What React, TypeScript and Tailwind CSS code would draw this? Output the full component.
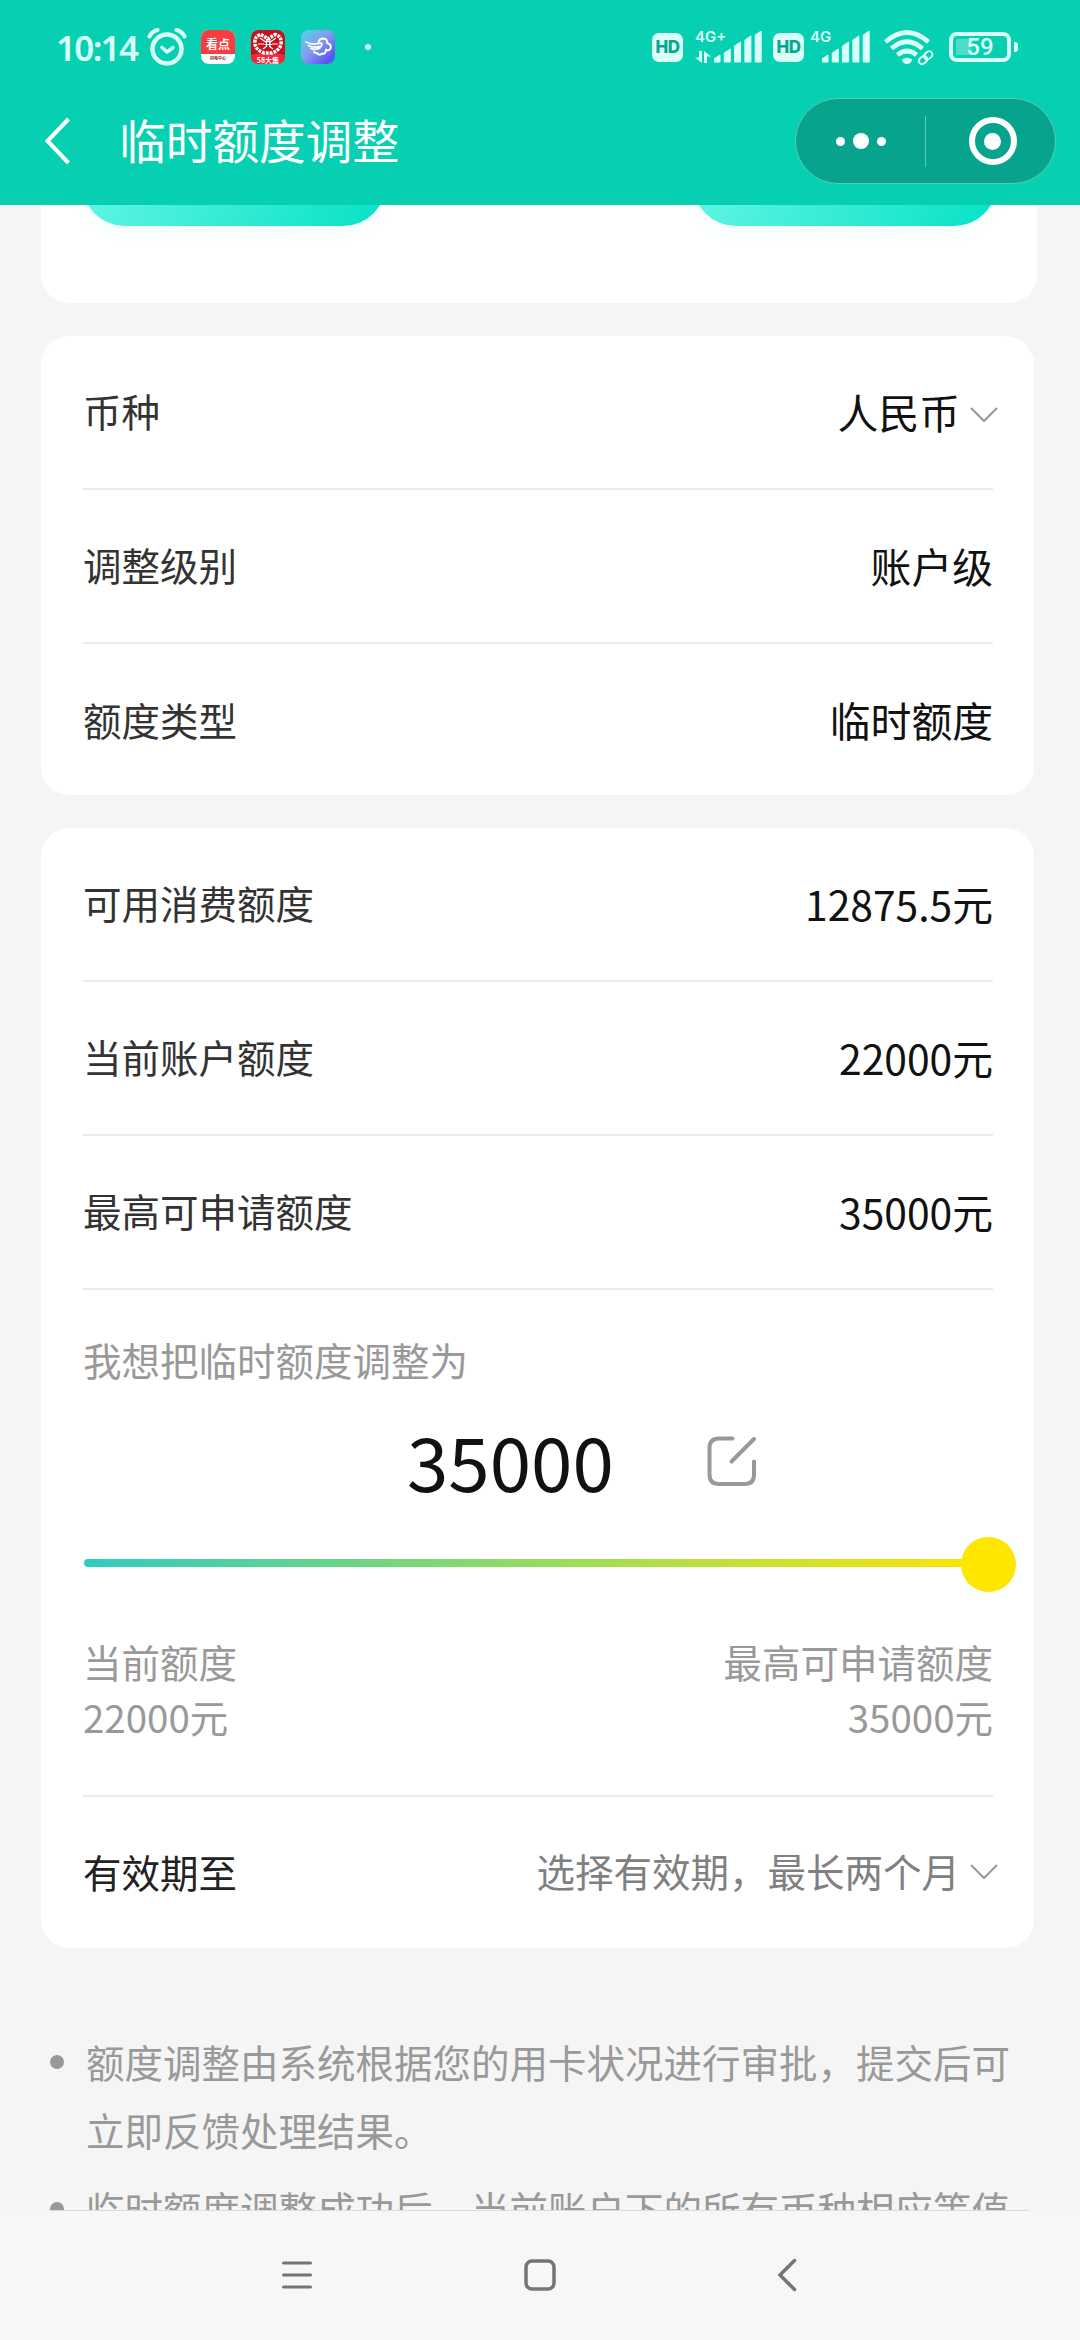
import type { ReactNode } from 'react'
import clsx from 'clsx'

type RowProps = {
  label: string
  children: ReactNode
  last?: boolean
  labelClassName?: string
}

const bars = [7, 13, 20, 26, 31]

const notes = [
  '额度调整由系统根据您的用卡状况进行审批，提交后可立即反馈处理结果。',
  '临时额度调整成功后，当前账户下的所有币种相应等值',
]

function Signal({ className }: { className?: string }) {
  return (
    <svg className={className} width="48" height="32" fill="currentColor">
      {bars.map((h, i) => (
        <path key={h} d={`M${i * 10.3} 31v-${h - 4}l6 -4v${h}z`} stroke="currentColor" strokeWidth="1" strokeLinejoin="round" />
      ))}
    </svg>
  )
}

function HdBadge() {
  return (
    <span className="flex h-[29px] w-[31px] items-center justify-center rounded-[7px] bg-[#d8fff8] font-['Inter'] text-[17px] font-extrabold leading-none tracking-[-0.5px] text-[#07a78f]">
      HD
    </span>
  )
}

function AlarmIcon() {
  return (
    <svg width="40" height="38" viewBox="0 0 40 38" fill="none" stroke="currentColor" strokeLinecap="round" strokeLinejoin="round">
      <circle cx="20" cy="21" r="14.5" strokeWidth="4.5" />
      <path d="M15 19.5l5 4.5 6-4.5" strokeWidth="3.5" />
      <path d="M2.5 8.5C4 5 7 2.8 10.5 2M29.5 2C33 2.8 36 5 37.5 8.5" strokeWidth="4" />
    </svg>
  )
}

function StatusBar() {
  return (
    <div className="flex h-[95px] items-start pl-[56px] pt-[28px] text-[#d8fff8]">
      <span className="mt-[2px] w-[91px] font-['Noto_Sans'] text-[35px] font-semibold leading-[36px] tracking-[-1.7px]">
        10:14
      </span>
      <AlarmIcon />
      <div className="ml-[14px] mt-[2px] flex gap-4">
        <span className="flex size-[34px] flex-col overflow-hidden rounded-[8px] bg-white">
          <span className="flex h-6 items-center justify-center bg-[#f93c3f] pt-1 font-['Noto_Sans_CJK_SC'] text-[12px] font-bold leading-none text-white">
            看点
          </span>
          <span className="text-center font-['Noto_Sans_CJK_SC'] text-[4px] font-bold leading-[9px] text-[#8a2020]">
            闪电中心
          </span>
        </span>
        <svg width="34" height="34" viewBox="0 0 34 34">
          <rect width="34" height="34" rx="8" fill="#c9101c" />
          <path d="M0 25Q17 20 34 25V26Q34 34 26 34H8Q0 34 0 26z" fill="#ee2a3e" />
          <path d="M10 4.5L17 9L24 4.5Q31 6 30 14Q29 20 21 23H13Q5 20 4 14Q3 6 10 4.500z" fill="none" stroke="#fff" strokeWidth="3.500" strokeDasharray="2.800 1" />
          <path d="M9 8L16 13M25 8L18 13M7 14H13M27 14H21M12 19L16 16M22 19L18 16M15.500 9V17M19 9V17M13.500 11.500H21M13.500 14.500H21" stroke="#fff" strokeWidth="1.200" />
          <text x="17" y="32.500" textAnchor="middle" fontSize="7" fontWeight="700" fill="#fff" fontFamily="Noto Sans CJK SC">58大集</text>
        </svg>
        <svg width="34" height="34" viewBox="0 0 34 34">
          <defs>
            <linearGradient id="cloud" x1="0" y1="0.3" x2="0.7" y2="1">
              <stop offset="0" stopColor="#5fc4ee" />
              <stop offset="0.45" stopColor="#869bee" />
              <stop offset="1" stopColor="#5b55f4" />
            </linearGradient>
          </defs>
          <rect width="34" height="34" rx="8" fill="url(#cloud)" />
          <g fill="none" stroke="#fff" strokeLinecap="round" strokeLinejoin="round">
            <path d="M17.500 12Q18.500 8.500 22 8.500Q27 9 26 13Q31 14.500 29.500 18.500Q27.500 21.500 25 19.500Q25 24.500 21 23.500Q18.500 26 16 23Q13.500 23.500 13 21.500" strokeWidth="2" />
            <path d="M5 12Q11 15.500 20 13Q22 14 20 16Q13 18.500 7.500 15.500M10 18.500Q15 20.500 19.500 17.500" strokeWidth="1.700" />
          </g>
        </svg>
      </div>
      <span className="ml-[30px] mt-4 size-[6px] rounded-full bg-current" />
      <div className="ml-auto mr-[62px] mt-[3px] flex">
        <div className="mt-[2px]">
          <HdBadge />
        </div>
        <div className="relative ml-3 h-8 w-[68px] font-['Inter'] text-[15px] font-semibold leading-none">
          <span className="absolute -top-[2px] left-0">4G+</span>
          <svg className="absolute left-0 top-[20px]" width="16" height="12" fill="currentColor">
            <path d="M4 0h3v12L0 6.500h4zM9 12V0l7 5.500h-4V12z" />
          </svg>
          <Signal className="absolute left-[19px] top-0" />
        </div>
        <div className="ml-[10px] mt-[2px]">
          <HdBadge />
        </div>
        <div className="relative ml-[6px] h-8 w-[61px] font-['Inter'] text-[15px] font-semibold leading-none">
          <span className="absolute -top-[2px] left-0">4G</span>
          <Signal className="absolute left-3 top-0" />
        </div>
        <svg className="ml-[13px] -mt-px" width="50" height="36" viewBox="0 0 50 36" fill="none" stroke="currentColor">
          <path d="M1.500 12Q23-7 44.500 12M7.500 18.500Q23 5 38.500 18.500M13.500 25Q23 17 32.500 25" strokeWidth="4.600" />
          <path d="M18 29.500Q23 26 28 29.500Q27 34 23 34Q19 34 18 29.500z" fill="currentColor" stroke="none" />
          <g strokeWidth="2" transform="rotate(-42 41.500 27.500)">
            <rect x="33.500" y="24.500" width="9" height="6.500" rx="3.200" />
            <rect x="40.500" y="24.500" width="9" height="6.500" rx="3.200" />
          </g>
        </svg>
        <div className="ml-[15px] flex h-[31px] items-center gap-[3px]">
          <span className="flex h-[30px] w-[62px] items-center justify-center rounded-[8px] border-4 border-current bg-[linear-gradient(90deg,#4fdcc6_30%,transparent_40%)] bg-clip-content p-[3px] font-['Roboto'] text-[24px] font-medium leading-none">
            59
          </span>
          <span className="h-[10px] w-1 rounded-r-[3px] bg-current" />
        </div>
      </div>
    </div>
  )
}

function Header() {
  return (
    <header className="relative z-10 h-[205px] shrink-0 bg-[#07d0b2]">
      <StatusBar />
      <div className="flex h-[92px] items-center pl-[44px] pr-[24px]">
        <svg width="28" height="48" fill="none" stroke="#fff" strokeWidth="4">
          <path d="M24.500 2L3.500 24L24.500 46" />
        </svg>
        <h1 className="ml-[47px] pb-[4px] text-[46.700px] leading-none text-white">临时额度调整</h1>
        <div className="ml-auto flex h-[86px] w-[261px] items-center rounded-full border border-[#52cdb9] bg-[#07a38c]">
          <div className="flex w-[129px] items-center justify-center gap-2">
            <span className="size-[9px] rounded-full bg-white" />
            <span className="size-4 rounded-full bg-white" />
            <span className="size-[9px] rounded-full bg-white" />
          </div>
          <div className="h-[51px] w-px bg-[#52cdb9]" />
          <div className="flex w-[129px] items-center justify-center pl-[4px]">
            <span className="flex size-12 items-center justify-center rounded-full border-[6px] border-white">
              <span className="size-[17px] rounded-full bg-white" />
            </span>
          </div>
        </div>
      </div>
    </header>
  )
}

function Row({ label, children, last, labelClassName }: RowProps) {
  return (
    <div className={clsx('flex items-center justify-between', last ? 'h-[151px]' : 'h-[154px] border-b-2 border-[#ebebeb] pb-[2px]')}>
      <span className={clsx('text-[38.500px]', labelClassName ?? 'text-[#333]')}>{label}</span>
      <span className="flex items-center pt-[1px] text-[40.800px] text-[#111]">{children}</span>
    </div>
  )
}

function Chevron({ className }: { className?: string }) {
  return (
    <svg className={clsx('-mr-[5px] ml-[10px]', className)} width="28" height="16" fill="none" stroke="#999" strokeWidth="2">
      <path d="M1 1L14 14L27 1" />
    </svg>
  )
}

function LimitSlider() {
  return (
    <div className="relative mt-[43px] h-[55px]">
      <div className="absolute left-px top-[22px] h-2 w-[909px] rounded-full bg-[linear-gradient(90deg,#2fcbc0,#95dc5e_50%,#ffe600)]" />
      <div className="absolute -right-[23px] top-0 size-[55px] rounded-full bg-[#ffe600]" />
    </div>
  )
}

function PillButton() {
  return <div className="h-[86px] w-[304px] rounded-full bg-[linear-gradient(115deg,#68f6e6,#06e2c6)] shadow-[0_6px_16px_rgba(90,250,230,0.08)]" />
}

export default function App() {
  return (
    <div className="flex h-[2340px] w-[1080px] flex-col overflow-hidden bg-[#f5f5f5] font-['Noto_Sans_CJK_SC',sans-serif]">
      <Header />
      <main className="h-[2005px] shrink-0 overflow-hidden pl-[41px]">
        <section className="-mt-[65px] flex h-[163px] w-[996px] justify-between rounded-[28px] bg-white pl-[41px] pr-[40px]">
          <PillButton />
          <PillButton />
        </section>

        <section className="mt-[33px] w-[993px] rounded-[28px] bg-white pl-[42px] pr-[41px]">
          <Row label="币种">
            人民币
            <Chevron className="mt-[6px]" />
          </Row>
          <Row label="调整级别">账户级</Row>
          <Row label="额度类型" last>
            临时额度
          </Row>
        </section>

        <section className="mt-[33px] w-[993px] rounded-[28px] bg-white pl-[42px] pr-[41px]">
          <Row label="可用消费额度">12875.5元</Row>
          <Row label="当前账户额度">22000元</Row>
          <Row label="最高可申请额度">35000元</Row>
          <div className="h-[507px] border-b-2 border-[#ebebeb] pt-[42px] text-[38.500px] text-[#999]">
            <p className="leading-[55px]">我想把临时额度调整为</p>
            <div className="mt-[42px] flex h-[65px]">
              <div className="ml-[324px] w-[210px] text-[74.500px] leading-[62px] text-[#111]">35000</div>
              <svg className="ml-[90px] mt-[7px]" width="50" height="51" fill="none" stroke="#999" strokeWidth="4" strokeLinecap="round">
                <path d="M25.500 2.500H12Q2.500 2.500 2.500 12V38.500Q2.500 48 12 48H37.500Q47 48 47 38.500V25.500M24.500 25.500L47 3" />
              </svg>
            </div>
            <LimitSlider />
            <div className="mt-[42px] flex justify-between leading-[55px]">
              <p>
                当前额度
                <br />
                22000元
              </p>
              <p className="text-right">
                最高可申请额度
                <br />
                35000元
              </p>
            </div>
          </div>
          <Row label="有效期至" labelClassName="pb-[2px] text-[#222]" last>
            <span className="pb-[4px] text-[38.500px] text-[#808080]">选择有效期，最长两个月</span>
            <Chevron className="-mt-[2px]" />
          </Row>
        </section>

        <ul className="mt-[80px] space-y-3 text-[38.500px] leading-[67.500px] text-[#999]">
          {notes.map((note) => (
            <li key={note} className="flex pl-[9px]">
              <span className="mr-[22px] mt-[27px] size-[14px] shrink-0 rounded-full bg-[#999]" />
              <p className="w-[930px]">{note}</p>
            </li>
          ))}
        </ul>
      </main>

      <nav className="flex flex-1 flex-col bg-[#f7f7f7] text-[#757575]">
        <div className="ml-[49px] h-px w-[980px] bg-[#dcdcdc]" />
        <div className="flex h-[128px] items-center pl-[282px]">
          <svg width="30" height="30" stroke="currentColor" strokeWidth="3" strokeLinecap="round">
            <path d="M1.500 3H28.500M1.500 15H28.500M1.500 27H28.500" />
          </svg>
          <svg className="ml-[212px]" width="32" height="32" fill="none" stroke="currentColor" strokeWidth="3.500">
            <rect x="2" y="2" width="28" height="28" rx="6" />
          </svg>
          <svg className="ml-[221px]" width="20" height="34" fill="none" stroke="currentColor" strokeWidth="3.500" strokeLinecap="round">
            <path d="M17.500 2.500L3 17L17.500 31.500" />
          </svg>
        </div>
      </nav>
    </div>
  )
}
